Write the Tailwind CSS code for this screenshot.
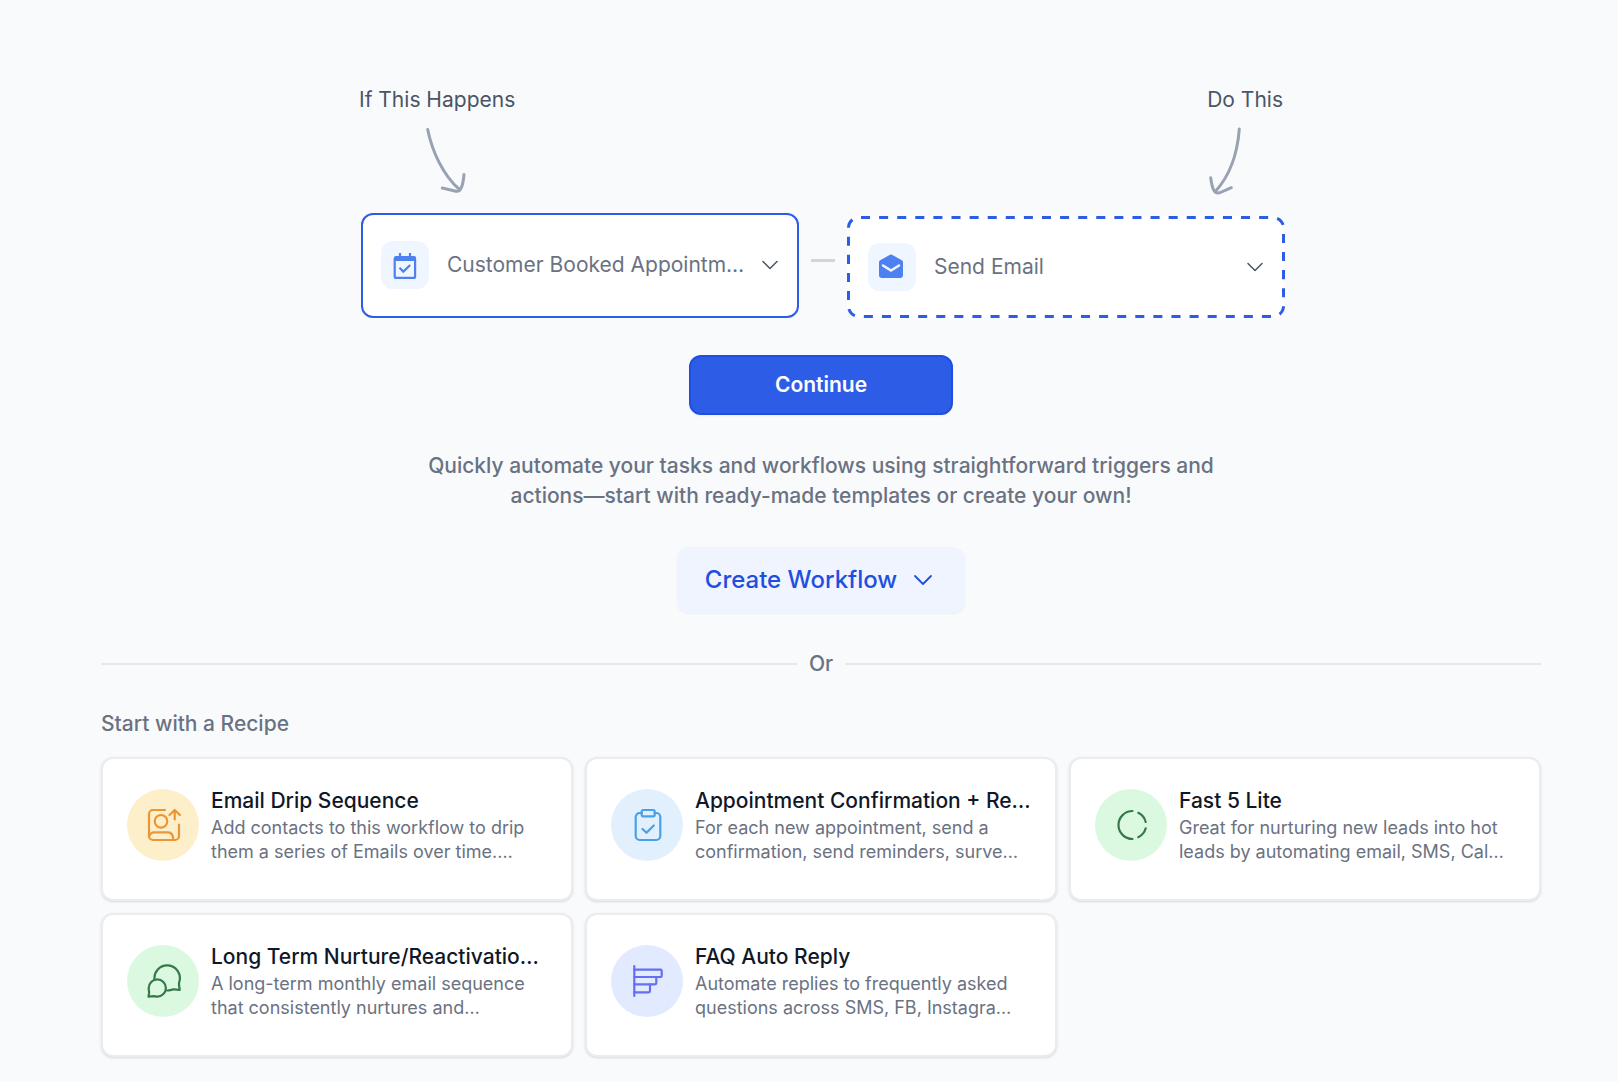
<!DOCTYPE html>
<html lang="en">
<head>
    <meta charset="UTF-8">
    <meta name="viewport" content="width=device-width, initial-scale=1.0">
    <title>Create Workflow</title>
    <script src="https://cdn.jsdelivr.net/npm/@tailwindcss/browser@4"></script>
</head>
<body class="bg-[#f9fafc] min-h-screen font-['Inter','Liberation_Sans',sans-serif] text-gray-500">
    <main class="pl-[101px] pr-[77px] pt-[85px] pb-6 flex flex-col items-center">

        <!-- Labels and arrows -->
        <div class="w-full max-w-[924px] flex justify-between text-[21px] leading-[30px] text-gray-600">
            <div class="flex flex-col items-start">
                <label for="trigger">If This Happens</label>
                <svg class="mt-3 ml-[66px]" width="44" height="68" viewBox="0 0 44 68" fill="none" stroke="#98a2b3" stroke-width="3" stroke-linecap="round" stroke-linejoin="round">
                    <path d="M2.7 2.5C7 24 18 48 34 62"/>
                    <path d="M17.3 61L31 64.2C36 65.5 38 58 39 47.5"/>
                </svg>
            </div>
            <div class="flex flex-col items-end">
                <label for="action">Do This</label>
                <svg class="mt-3 mr-[39px]" width="36" height="68" viewBox="0 0 36 68" fill="none" stroke="#98a2b3" stroke-width="3" stroke-linecap="round" stroke-linejoin="round">
                    <path d="M31.3 2C29.5 26 22 48 8 63.7"/>
                    <path d="M2.7 50.7C3.5 57 4.5 61 6 63.5C8 67 10.5 66.5 13.5 65L23.3 60.7"/>
                </svg>
            </div>
        </div>

        <!-- Trigger and action pickers -->
        <div class="w-full max-w-[928px] pl-1 mt-[18px] grid grid-cols-[minmax(0,1fr)_48px_minmax(0,1fr)] items-end text-[21px] leading-[30px]">
            <div class="h-[105px] flex items-center gap-[18px] px-[18px] pb-[2px] bg-white border-2 border-[#2d5ce6] rounded-xl">
                <span class="shrink-0 size-12 rounded-xl bg-[#eff6ff]">
                    <svg width="48" height="48" viewBox="0 0 48 48" fill="none" stroke="#4d80f0" stroke-width="2.2" stroke-linejoin="round">
                        <rect x="13.7" y="16.5" width="20.4" height="20.4" rx="1.5"/>
                        <path d="M13 20V17a2 2 0 0 1 2-2h18a2 2 0 0 1 2 2v3Z" fill="#4d80f0" stroke="none"/>
                        <path d="M19 12v4M29 12v4"/>
                        <path d="M18.5 26.8l3.8 3.8L29.2 24" stroke-linejoin="miter"/>
                    </svg>
                </span>
                <select id="trigger" class="flex-1 min-w-0 appearance-none bg-transparent outline-none">
                    <option>Customer Booked Appointm…</option>
                </select>
                <svg class="shrink-0 pointer-events-none" width="18" height="18" viewBox="0 0 18 18" fill="none" stroke="#475467" stroke-width="1.5" stroke-linecap="round" stroke-linejoin="round">
                    <path d="M2 5.5l7 7 7-7"/>
                </svg>
            </div>
            <div class="h-[105px] flex justify-center pt-[46px]">
                <span class="w-6 h-[3px] bg-gray-300"></span>
            </div>
            <div class="relative h-[102px] flex items-center gap-[18px] px-[21px] bg-white rounded-xl">
                <svg class="absolute inset-0 size-full pointer-events-none" fill="none" stroke="#2d5ce6" stroke-width="3">
                    <rect class="w-[calc(100%-3px)] h-[calc(100%-3px)]" x="1.5" y="1.5" rx="10.5" pathLength="1044" stroke-dasharray="9 9" stroke-dashoffset="-2"/>
                </svg>
                <span class="shrink-0 size-12 rounded-xl bg-[#eff6ff]">
                    <svg width="48" height="48" viewBox="0 0 48 48" fill="none">
                        <path d="M11 19.2c0-.9.4-1.5 1.2-1.9l9.8-5.6a2 2 0 0 1 2 0l9.8 5.6c.8.4 1.2 1 1.2 1.9V32.6a2.4 2.4 0 0 1-2.4 2.4H13.4a2.4 2.4 0 0 1-2.4-2.4Z" fill="#4d80f0"/>
                        <path d="M15 22.5l8 5 8-5" stroke="#eff6ff" stroke-width="2.6" stroke-linecap="round"/>
                    </svg>
                </span>
                <select id="action" class="flex-1 min-w-0 appearance-none bg-transparent outline-none">
                    <option>Send Email</option>
                </select>
                <svg class="shrink-0 pointer-events-none" width="18" height="18" viewBox="0 0 18 18" fill="none" stroke="#475467" stroke-width="1.5" stroke-linecap="round" stroke-linejoin="round">
                    <path d="M2 5.5l7 7 7-7"/>
                </svg>
            </div>
        </div>

        <button type="button" class="mt-[37px] w-[264px] h-[60px] rounded-xl border-2 border-[#1f4fe0] bg-[#2d5ce6] text-white text-[21px] leading-[30px] font-semibold shadow-xs">Continue</button>

        <p class="mt-9 text-center text-[21px] leading-[30px] font-medium">
            Quickly automate your tasks and workflows using straightforward triggers and<br>
            actions—start with ready-made templates or create your own!
        </p>

        <button type="button" aria-haspopup="menu" class="mt-9 h-[66px] pl-7 pr-[30px] flex items-center gap-[14px] rounded-xl bg-[#eff4ff] text-[#1f4fe0] text-2xl font-medium shadow-xs">
            Create Workflow
            <svg width="24" height="24" viewBox="0 0 24 24" fill="none" stroke="currentColor" stroke-width="1.8" stroke-linecap="round" stroke-linejoin="round">
                <path d="M4 8l8 8 8-8"/>
            </svg>
        </button>

        <div class="w-full mt-9 flex items-center gap-3 text-[21px] leading-[30px] font-medium">
            <span class="flex-1 h-[2px] bg-gray-200"></span>
            Or
            <span class="flex-1 h-[2px] bg-gray-200"></span>
        </div>

        <!-- Recipes -->
        <h2 class="w-full mt-[30px] text-[21px] leading-[30px] font-medium">Start with a Recipe</h2>
        <div class="w-full mt-[18px] grid grid-cols-3 gap-3">
            <button type="button" class="h-36 pt-[27px] px-6 flex items-start gap-3 text-left bg-white border-2 border-[#eaecf0] rounded-xl shadow-sm">
                <span class="shrink-0 mt-[3px] size-[72px] rounded-full bg-[#fdefca] flex items-center justify-center">
                    <svg width="36" height="36" viewBox="0 0 36 36" fill="none" stroke="#ec9633" stroke-width="2.2" stroke-linecap="round" stroke-linejoin="round">
                        <path d="M20 3H8a4 4 0 0 0-4 4v22a4 4 0 0 0 4 4h22a4 4 0 0 0 4-4V17.5"/>
                        <circle cx="16" cy="14.3" r="6.3"/>
                        <path d="M4.3 29C5 26.5 7 25.3 9 25.3h14c3.5 0 5.3 3 5.3 7.7"/>
                        <path d="M29.7 12.5V3M24.5 8l5.2-5 5.2 5"/>
                    </svg>
                </span>
                <span class="min-w-0">
                    <span class="block text-[21px] leading-[30px] font-medium text-gray-900 whitespace-nowrap">Email Drip Sequence</span>
                    <span class="block text-lg leading-6 whitespace-nowrap">Add contacts to this workflow to drip<br>them a series of Emails over time.…</span>
                </span>
            </button>

            <button type="button" class="h-36 pt-[27px] px-6 flex items-start gap-3 text-left bg-white border-2 border-[#eaecf0] rounded-xl shadow-sm">
                <span class="shrink-0 mt-[3px] size-[72px] rounded-full bg-[#e2f0fd] flex items-center justify-center">
                    <svg width="36" height="36" viewBox="0 0 36 36" fill="none" stroke="#47a0ea" stroke-width="2.2" stroke-linecap="round" stroke-linejoin="round">
                        <path d="M12.7 6H10.7a4 4 0 0 0-4 4v19a4 4 0 0 0 4 4h16.6a4 4 0 0 0 4-4V10a4 4 0 0 0-4-4h-1.6"/>
                        <rect x="12.7" y="3" width="13" height="6.3" rx="1.5"/>
                        <path d="M13.5 22l4 3.8 7.3-7.3"/>
                    </svg>
                </span>
                <span class="min-w-0">
                    <span class="block text-[21px] leading-[30px] font-medium text-gray-900 whitespace-nowrap">Appointment Confirmation + Re…</span>
                    <span class="block text-lg leading-6 whitespace-nowrap">For each new appointment, send a<br>confirmation, send reminders, surve…</span>
                </span>
            </button>

            <button type="button" class="h-36 pt-[27px] px-6 flex items-start gap-3 text-left bg-white border-2 border-[#eaecf0] rounded-xl shadow-sm">
                <span class="shrink-0 mt-[3px] size-[72px] rounded-full bg-[#dbf9e0] flex items-center justify-center">
                    <svg width="36" height="36" viewBox="0 0 36 36" fill="none" stroke="#37784a" stroke-width="2.2" stroke-linecap="round" stroke-linejoin="round">
                        <path d="M19.5 4a14 14 0 0 0 0 28"/>
                        <path d="M25.3 5.8A14 14 0 0 1 32.7 15"/>
                        <path d="M32.7 21.3A14 14 0 0 1 25.3 30.2"/>
                    </svg>
                </span>
                <span class="min-w-0">
                    <span class="block text-[21px] leading-[30px] font-medium text-gray-900 whitespace-nowrap">Fast 5 Lite</span>
                    <span class="block text-lg leading-6 whitespace-nowrap">Great for nurturing new leads into hot<br>leads by automating email, SMS, Cal…</span>
                </span>
            </button>

            <button type="button" class="h-36 pt-[27px] px-6 flex items-start gap-3 text-left bg-white border-2 border-[#eaecf0] rounded-xl shadow-sm">
                <span class="shrink-0 mt-[3px] size-[72px] rounded-full bg-[#dbf9e0] flex items-center justify-center">
                    <svg width="36" height="36" viewBox="0 0 36 36" fill="none" stroke="#37784a" stroke-width="2.2" stroke-linecap="round" stroke-linejoin="round">
                        <path d="M9.6 17A12.7 12.7 0 1 1 34.3 18.8C33.8 20.5 33.9 21 34.1 22.5L34.7 27L29.5 26.4C28 26.2 27.5 26.3 26 26.9C24.8 27.3 23.5 27.5 22 27.5"/>
                        <path d="M12.3 16.4a8.6 8.6 0 1 1 0 17.2C10.8 33.6 10 33.1 8.8 33.1L3.5 33.7L4.1 29.8C4.2 28.5 3.7 27.5 3.7 25A8.6 8.6 0 0 1 12.3 16.4Z"/>
                    </svg>
                </span>
                <span class="min-w-0">
                    <span class="block text-[21px] leading-[30px] font-medium text-gray-900 whitespace-nowrap">Long Term Nurture/Reactivatio…</span>
                    <span class="block text-lg leading-6 whitespace-nowrap">A long-term monthly email sequence<br>that consistently nurtures and…</span>
                </span>
            </button>

            <button type="button" class="h-36 pt-[27px] px-6 flex items-start gap-3 text-left bg-white border-2 border-[#eaecf0] rounded-xl shadow-sm">
                <span class="shrink-0 mt-[3px] size-[72px] rounded-full bg-[#e1eafe] flex items-center justify-center">
                    <svg width="36" height="36" viewBox="0 0 36 36" fill="none" stroke="#666ff0" stroke-width="2.2" stroke-linecap="round" stroke-linejoin="round">
                        <path d="M5.3 3v30"/>
                        <path d="M5.3 6.7h26.2a1.2 1.2 0 0 1 1.2 1.2v4.9a1.2 1.2 0 0 1-1.2 1.2H5.3"/>
                        <path d="M27.3 14v6a1.3 1.3 0 0 1-1.3 1.3H5.3"/>
                        <path d="M21 21.3V28a1.3 1.3 0 0 1-1.3 1.3H5.3"/>
                    </svg>
                </span>
                <span class="min-w-0">
                    <span class="block text-[21px] leading-[30px] font-medium text-gray-900 whitespace-nowrap">FAQ Auto Reply</span>
                    <span class="block text-lg leading-6 whitespace-nowrap">Automate replies to frequently asked<br>questions across SMS, FB, Instagra…</span>
                </span>
            </button>
        </div>
    </main>
</body>
</html>
